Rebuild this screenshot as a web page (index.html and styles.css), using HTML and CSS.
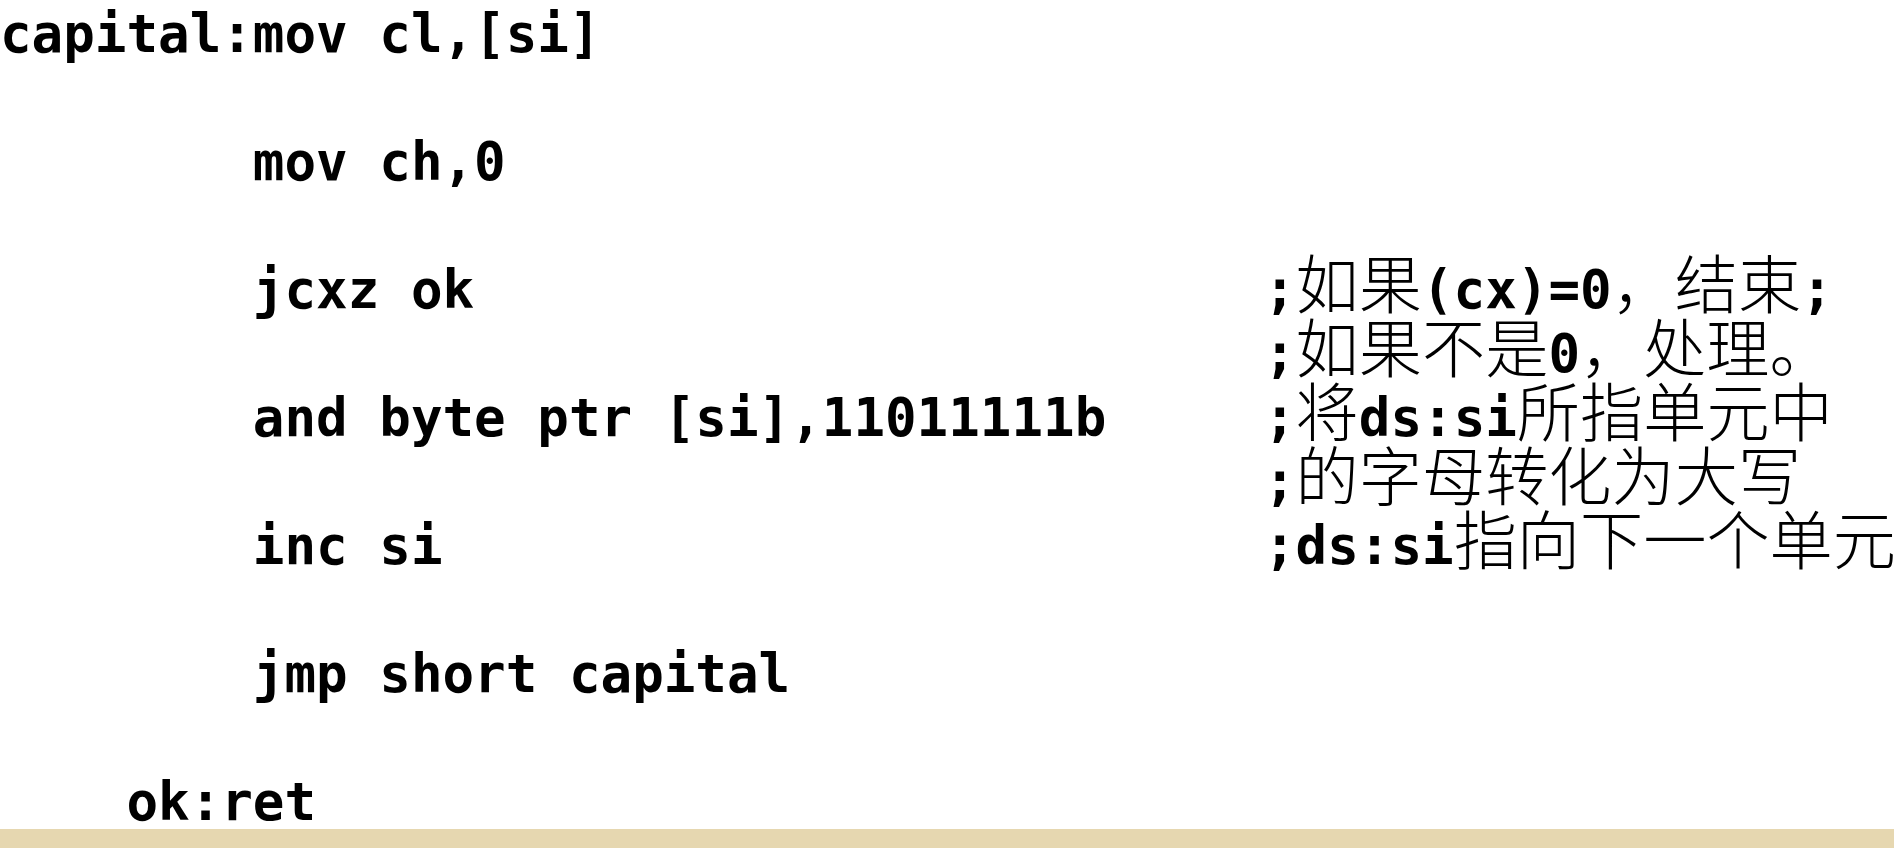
FILE: index.html
```html
<!DOCTYPE html>
<html lang="zh-CN">
<head>
<meta charset="utf-8">
<title>capital</title>
<link rel="stylesheet" href="styles.css">
</head>
<body>
<main class="listing">
  <div class="row"><span class="code">capital:mov cl,[si]</span><span class="cmt"></span></div>
  <div class="row"><span class="code"></span><span class="cmt"></span></div>
  <div class="row"><span class="code">        mov ch,0</span><span class="cmt"></span></div>
  <div class="row"><span class="code"></span><span class="cmt"></span></div>
  <div class="row"><span class="code">        jcxz ok</span><span class="cmt">;<span class="zh">如果</span>(cx)=0<span class="zh">，结束</span>;</span></div>
  <div class="row"><span class="code"></span><span class="cmt">;<span class="zh">如果不是</span>0<span class="zh">，处理。</span></span></div>
  <div class="row"><span class="code">        and byte ptr [si],11011111b</span><span class="cmt">;<span class="zh">将</span>ds:si<span class="zh">所指单元中</span></span></div>
  <div class="row"><span class="code"></span><span class="cmt">;<span class="zh">的字母转化为大写</span></span></div>
  <div class="row"><span class="code">        inc si</span><span class="cmt">;ds:si<span class="zh">指向下一个单元</span></span></div>
  <div class="row"><span class="code"></span><span class="cmt"></span></div>
  <div class="row"><span class="code">        jmp short capital</span><span class="cmt"></span></div>
  <div class="row"><span class="code"></span><span class="cmt"></span></div>
  <div class="row"><span class="code">    ok:ret</span><span class="cmt"></span></div>
</main>
<footer class="bar"></footer>
</body>
</html>
```

FILE: styles.css
```css
html, body {
  margin: 0;
  padding: 0;
  overflow: hidden;
  background: #ffffff;
}

body {
  width: 1894px;
  height: 848px;
  display: flex;
  flex-direction: column;
  color: #000000;
  font-family: "DejaVu Sans Mono", "Liberation Mono", monospace;
  font-weight: bold;
  font-size: 52.5px;
}

.listing {
  flex: 1 1 auto;
  min-height: 0;
  padding-top: 2px;
}

.row {
  display: grid;
  grid-template-columns: 1264px 640px;
  height: 64px;
  line-height: 64px;
}

.code,
.cmt {
  white-space: pre;
}

.zh {
  font-family: "Noto Sans CJK SC", sans-serif;
  font-weight: 300;
  font-size: 63.2px;
  line-height: 0;
}

.bar {
  position: relative;
  height: 19px;
  flex: none;
  background: #e6d7b0;
}
```
